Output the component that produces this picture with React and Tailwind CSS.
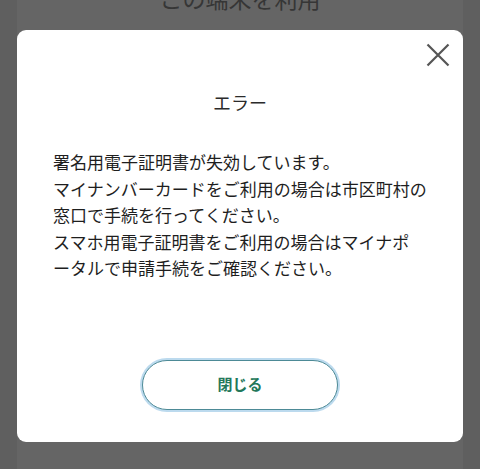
import React from "react";

export default function App() {
  const font = { fontFamily: '"Noto Sans CJK JP", "Noto Sans", sans-serif' };
  return (
    <div className="relative w-[480px] h-[469px] overflow-hidden bg-[#5f5f5f]" style={font}>
      {/* background page */}
      <div className="mx-[17px] h-full bg-[#656565] flex flex-col items-center">
        <div className="mt-[-13px] text-[23px] leading-[23px] text-[#363636] whitespace-nowrap">
          この端末を利用
        </div>
      </div>

      {/* modal */}
      <div className="absolute left-[17px] top-[30px] w-[446px] h-[412px] bg-white rounded-[9px] flex flex-col items-center">
        <button className="absolute right-[13px] top-[13px] w-[24px] h-[24px] flex items-center justify-center">
          <svg width="24" height="24" viewBox="0 0 24 24" fill="none">
            <path d="M1.5 1.5 L22.5 22.5 M22.5 1.5 L1.5 22.5" stroke="#555" strokeWidth="2.2" strokeLinecap="butt" />
          </svg>
        </button>

        <div className="mt-[59px] text-[18px] leading-[26px] text-[#2b2b2b]">エラー</div>

        <div className="mt-[34px] self-start pl-[36px] text-[17px] leading-[26.5px] text-[#1e1e1e] whitespace-nowrap">
          署名用電子証明書が失効しています。
          <br />
          マイナンバーカードをご利用の場合は市区町村の
          <br />
          窓口で手続を行ってください。
          <br />
          スマホ用電子証明書をご利用の場合はマイナポ
          <br />
          ータルで申請手続をご確認ください。
        </div>

        <button className="mt-[78px] w-[196px] h-[50px] rounded-full bg-white border border-[#4d8a96] shadow-[0_0_0_2px_#bcdaee] flex items-center justify-center text-[15px] font-bold text-[#23785a]">
          閉じる
        </button>
      </div>
    </div>
  );
}
